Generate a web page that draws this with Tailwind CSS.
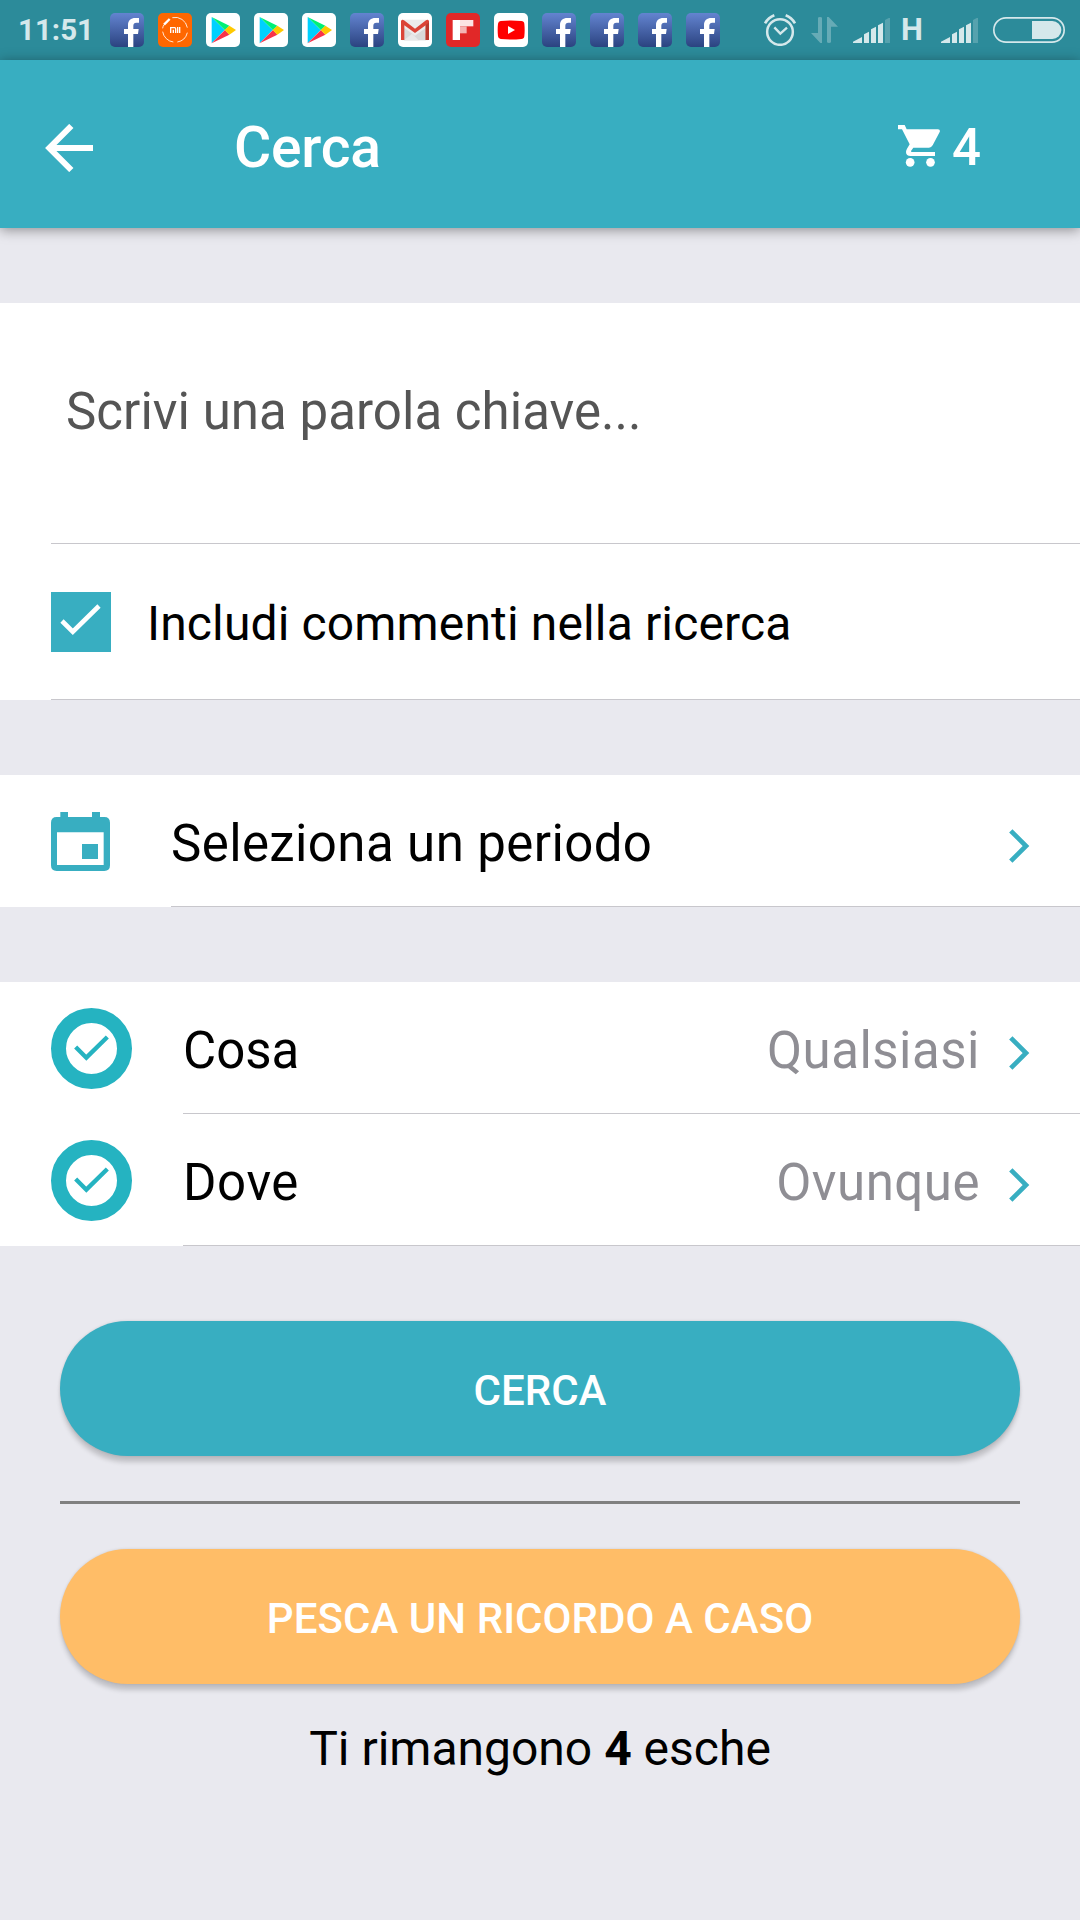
<!DOCTYPE html>
<html lang="it">
<head>
<meta charset="utf-8">
<title>Cerca</title>
<script src="https://cdn.jsdelivr.net/npm/@tailwindcss/browser@4"></script>
</head>
<body class="w-[1080px] h-[1920px] overflow-hidden bg-[#e9e9ef] font-[Roboto,sans-serif] text-black">
<svg class="absolute size-0">
  <defs>
    <linearGradient id="fbg" x1="0" y1="0" x2="0" y2="1"><stop offset="0" stop-color="#6384d0"/><stop offset="1" stop-color="#2b4380"/></linearGradient>
    <symbol id="fb" viewBox="0 0 102 102"><rect width="102" height="102" rx="15" fill="url(#fbg)"/><path fill="#fff" d="M54 102V63H42V48H54V37C54 22 63 15 76 15H87V29H79C73 29 70 32 70 38V48H86L84 63H70V102Z"/></symbol>
    <symbol id="play" viewBox="0 0 102 102"><rect width="102" height="102" rx="15" fill="#fff"/><path fill="#00d0ff" d="M17 12V91L56 51Z"/><path fill="#00f076" d="M17 12L70 38L57 52Z"/><path fill="#f8334a" d="M17 91L70 65L57 51Z"/><path fill="#ffc900" d="M70 38L90 51L70 65L56 51Z"/></symbol>
    <symbol id="signal" viewBox="0 0 111 75"><path fill="#d5e8eb" d="M0 75V71L27 57V75ZM33 75V49L48 41V75ZM54 75V34L69 26V75ZM75 75V22L90 14V75Z"/><path fill="#d5e8eb" opacity=".25" d="M96 75V6L107 0H111V75Z"/></symbol>
    <symbol id="chev" viewBox="0 0 21 34"><path fill="none" stroke="#38aec1" stroke-width="4.7" d="M1.8 1.8L17 17L1.8 32.2"/></symbol>
    <symbol id="ring" viewBox="0 0 243 243"><circle cx="121.500" cy="121.500" r="99" fill="none" stroke="#25b3c1" stroke-width="45"/><path fill="none" stroke="#25b3c1" stroke-width="13" d="M74 117L106 149L169 87"/></symbol>
  </defs>
</svg>

<!-- status bar -->
<div class="flex h-[60px] items-center bg-[#2c8b9a]">
  <div class="w-[110px] pl-[18px] text-[29.5px] leading-[60px] font-bold text-[#d5e8eb]">11:51</div>
  <div class="flex gap-[14px]">
    <svg class="size-[34px]"><use href="#fb"/></svg>
    <svg class="size-[34px]" viewBox="0 0 102 102"><rect width="102" height="102" rx="15" fill="#ff6700"/><path fill="none" stroke="#fff" stroke-width="2.500" d="M43 14A37 37 0 0 1 88 44M88 59A37 37 0 0 1 58 87M46 87A37 37 0 0 1 14 56M14 46A37 37 0 0 1 17 36"/><path stroke="#fff" stroke-width="7" d="M18 35L35 18"/><path fill="none" stroke="#fff" stroke-width="4" d="M38 60V44H50Q53 44 53 48V60M46 50V60M59 42V60M65 42V60"/></svg>
    <svg class="size-[34px]"><use href="#play"/></svg>
    <svg class="size-[34px]"><use href="#play"/></svg>
    <svg class="size-[34px]"><use href="#play"/></svg>
    <svg class="size-[34px]"><use href="#fb"/></svg>
    <svg class="size-[34px]" viewBox="0 0 102 102"><rect width="102" height="102" rx="15" fill="#fff"/><path fill="#ececec" d="M12 20H90V82H12Z"/><path fill="#d9d9d9" d="M18 44L51 68L84 44V82H18Z"/><path fill="#e8e8e8" d="M18 82L42 62L62 82Z"/><path fill="#db4437" d="M9 24Q12 18 18 22L51 47L84 22Q90 18 93 24V81H83V37L51 60L19 37V81H9Z"/><path fill="#b93a2e" d="M83 37L93 28V81H83Z"/></svg>
    <svg class="size-[34px]" viewBox="0 0 102 102"><rect width="102" height="102" rx="15" fill="#e12828"/><path fill="#fff" d="M20 21H42V81H20Z"/><path fill="#fce4e4" d="M42 21H82V40H42Z"/><path fill="#f4b5b5" d="M42 40H62V61H42Z"/></svg>
    <svg class="size-[34px]" viewBox="0 0 102 102"><rect width="102" height="102" rx="15" fill="#fff"/><path fill="#f00" d="M20 24Q51 21 82 24Q90 24 91 32Q93 51 91 70Q90 78 82 78Q51 81 20 78Q13 78 12 70Q10 51 12 32Q13 24 20 24Z"/><path fill="#fff" d="M42 39L63 51L42 63Z"/></svg>
    <svg class="size-[34px]"><use href="#fb"/></svg>
    <svg class="size-[34px]"><use href="#fb"/></svg>
    <svg class="size-[34px]"><use href="#fb"/></svg>
    <svg class="size-[34px]"><use href="#fb"/></svg>
  </div>
  <svg class="ml-[44px] h-[32px] w-[32px]" viewBox="132 39 96 96"><g fill="none" stroke="#d5e8eb"><circle cx="180" cy="93" r="38.500" stroke-width="7.500"/><path stroke-width="7" d="M163 79L181 98L201 80"/><path stroke-width="8" d="M135 67Q145 50 163 43M197 43Q215 50 225 67"/></g></svg>
  <svg class="ml-[15px] h-[26px] w-[27px]" viewBox="273 51 81 78"><path fill="#d5e8eb" opacity=".35" d="M273 99H294V54Q294 51 300 51Q306 51 306 54V129H301ZM321 51H326L354 80H333V125Q333 129 327 129Q321 129 321 125Z"/></svg>
  <svg class="ml-[15px] h-[25px] w-[37px]"><use href="#signal"/></svg>
  <div class="ml-[11px] w-[23px] text-[31px] leading-[62px] font-bold text-[#d5e8eb]">H</div>
  <svg class="ml-[17px] h-[25px] w-[37px]"><use href="#signal"/></svg>
  <svg class="ml-[15px] h-[26px] w-[72px]" viewBox="0 0 216 78"><rect x="2.500" y="2.500" width="211" height="73" rx="36.500" fill="none" stroke="#d5e8eb" stroke-width="5"/><path fill="#d5e8eb" d="M117 12H178A27 27 0 0 1 178 66H117Z"/></svg>
</div>

<!-- app bar -->
<header class="flex h-[168px] items-center bg-[#38aec1] pl-[45px] text-white shadow-[0_2px_12px_rgba(0,0,0,0.4)]">
  <svg class="mt-[8px] size-[48px]" viewBox="135 372 144 144"><path fill="none" stroke="#fff" stroke-width="18" d="M214 378L148 444L214 510M150 444H279"/></svg>
  <h1 class="mt-[8px] ml-[141px] flex-1 text-[57px] font-medium tracking-[-0.2px]">Cerca</h1>
  <svg class="mt-[4px] size-[42px]" viewBox="534 375 126 126"><path fill="#fff" d="M534 375H554L560 388H654Q662 389 659 396L638 436Q634 443 627 443H580L573 453Q572 456 576 456H645V468H572Q558 468 558 456Q558 451 561 446L569 433L546 388H534Z"/><circle cx="570.500" cy="487" r="13" fill="#fff"/><circle cx="631.500" cy="487" r="13" fill="#fff"/></svg>
  <span class="mt-[8px] ml-[12px] w-[128px] text-[51px] font-medium">4</span>
</header>

<main>
  <section class="mt-[75px] bg-white pl-[51px]">
    <div class="flex h-[241px] items-center border-b border-[#c8c7cc] pb-[21px] pl-[15px] text-[51px] tracking-[0.04px] text-[#555]">Scrivi una parola chiave...</div>
    <label class="flex h-[156px] items-center border-b border-[#c8c7cc] text-[48px] tracking-[0.14px]">
      <svg class="size-[60px] bg-[#38aec1]" viewBox="0 0 60 60"><path fill="none" stroke="#fff" stroke-width="4.600" d="M11 29L21.800 39.700L48 14"/></svg>
      <span class="mt-[4px] ml-[36px]">Includi commenti nella ricerca</span>
    </label>
  </section>

  <section class="mt-[75px] flex h-[132px] bg-white pl-[51px]">
    <svg class="mt-[37px] size-[59px]" viewBox="153 156 177 177"><path fill="#38aec1" fill-rule="evenodd" d="M181 171V156H204V171H276V156H300V171H313Q330 171 330 188V316Q330 333 313 333H170Q153 333 153 316V188Q153 171 170 171ZM171 217V315H311V217ZM246 252H294V297H246Z"/></svg>
    <div class="ml-[61px] flex flex-1 items-center border-b border-[#c8c7cc] pr-[50px] text-[51px]">
      <span class="mt-[7px] flex-1 tracking-[0.4px]">Seleziona un periodo</span>
      <svg class="mt-[11px] h-[34px] w-[21px]"><use href="#chev"/></svg>
    </div>
  </section>

  <section class="mt-[75px] bg-white">
    <div class="flex h-[132px] pl-[51px]">
      <svg class="mt-[26px] size-[81px]"><use href="#ring"/></svg>
      <div class="ml-[51px] flex flex-1 items-center border-b border-[#c8c7cc] pr-[50px] text-[51px]">
        <span class="mt-[7px] flex-1">Cosa</span>
        <span class="mt-[7px] mr-[29px] tracking-[0.5px] text-[#8f8e94]">Qualsiasi</span>
        <svg class="mt-[11px] h-[34px] w-[21px]"><use href="#chev"/></svg>
      </div>
    </div>
    <div class="flex h-[132px] pl-[51px]">
      <svg class="mt-[26px] size-[81px]"><use href="#ring"/></svg>
      <div class="ml-[51px] flex flex-1 items-center border-b border-[#c8c7cc] pr-[50px] text-[51px]">
        <span class="mt-[7px] flex-1 tracking-[0.6px]">Dove</span>
        <span class="mt-[7px] mr-[29px] tracking-[0.5px] text-[#8f8e94]">Ovunque</span>
        <svg class="mt-[11px] h-[34px] w-[21px]"><use href="#chev"/></svg>
      </div>
    </div>
  </section>

  <div class="flex flex-col px-[60px] pt-[75px]">
    <button class="h-[135px] rounded-full bg-[#38aec1] pt-[3px] text-[42px] font-medium text-white shadow-[0_7px_5px_-1px_rgba(0,0,0,0.18),0_0_3px_rgba(0,0,0,0.12)]">CERCA</button>
    <div class="my-[45px] h-[3px] bg-[#808080]"></div>
    <button class="h-[135px] rounded-full bg-[#ffbd67] pt-[3px] text-[42px] font-medium tracking-[0.05px] text-white shadow-[0_7px_5px_-1px_rgba(0,0,0,0.18),0_0_3px_rgba(0,0,0,0.12)]">PESCA UN RICORDO A CASO</button>
    <p class="mt-[29px] text-center text-[48px] leading-[72px]">Ti rimangono <b class="font-bold">4</b> esche</p>
  </div>
</main>
</body>
</html>
